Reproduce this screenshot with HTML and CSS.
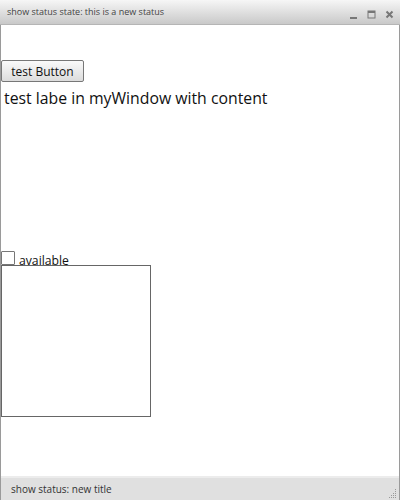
FILE: index.html
```html
<!DOCTYPE html>
<html>
<head>
<meta charset="utf-8">
<link rel="stylesheet" href="styles.css">
</head>
<body>
<div class="window">
  <div class="titlebar">
    <span class="title">show status state: this is a new status</span>
    <div class="controls">
      <svg width="9" height="9" viewBox="0 0 9 9"><rect x="1" y="7" width="7" height="2" fill="#777"/></svg>
      <svg width="9" height="9" viewBox="0 0 9 9"><rect x="1" y="1" width="7" height="7" fill="none" stroke="#777" stroke-width="1"/><rect x="1" y="1" width="7" height="2" fill="#777"/></svg>
      <svg width="9" height="9" viewBox="0 0 9 9"><path d="M1.5 1.5 L7.5 7.5 M7.5 1.5 L1.5 7.5" stroke="#777" stroke-width="2"/></svg>
    </div>
  </div>
  <div class="content">
    <button class="btn">test Button</button>
    <div class="label">test labe in myWindow with content</div>
    <div class="spacer"></div>
    <label class="check"><span class="box"></span><span class="check-text">available</span></label>
    <div class="panel"></div>
  </div>
  <div class="statusbar">
    <span>show status: new title</span>
    <svg class="grip" width="8" height="10" viewBox="0 0 8 10">
      <rect x="6" y="0" width="1" height="1" fill="#999"/>
      <rect x="6" y="2" width="1" height="1" fill="#999"/>
      <rect x="6" y="4" width="1" height="1" fill="#999"/>
      <rect x="6" y="6" width="1" height="1" fill="#999"/>
      <rect x="6" y="8" width="1" height="1" fill="#999"/>
      <rect x="4" y="4" width="1" height="1" fill="#999"/>
      <rect x="4" y="6" width="1" height="1" fill="#999"/>
      <rect x="4" y="8" width="1" height="1" fill="#999"/>
      <rect x="2" y="6" width="1" height="1" fill="#999"/>
      <rect x="2" y="8" width="1" height="1" fill="#999"/>
      <rect x="0" y="8" width="1" height="1" fill="#999"/>
    </svg>
  </div>
</div>
</body>
</html>
```
FILE: styles.css
```css
html, body {
  margin: 0;
  padding: 0;
  background: #fff;
}
body {
  font-family: "Open Sans", sans-serif;
}
.window {
  width: 400px;
  height: 500px;
  box-sizing: border-box;
  border-left: 1px solid #9a9a9a;
  border-right: 1px solid #9a9a9a;
  display: flex;
  flex-direction: column;
}
.titlebar {
  height: 24px;
  flex: none;
  background: linear-gradient(#f6f6f6, #c9c9c9);
  border-bottom: 1px solid #b5b5b5;
  display: flex;
  align-items: center;
  justify-content: space-between;
  padding: 0 6px 0 7px;
  margin: 0 -1px;
}
.title {
  font-size: 9px;
  color: #444;
  margin-top: -2px;
}
.controls {
  display: flex;
  gap: 9px;
  align-items: center;
  margin-top: 4px;
}
.content {
  flex: 1;
  display: flex;
  flex-direction: column;
  align-items: flex-start;
  padding-top: 35px;
}
.btn {
  font-family: "Open Sans", sans-serif;
  font-size: 12px;
  color: #111;
  height: 22px;
  width: 83px;
  padding: 0;
  border: 1px solid #777;
  border-radius: 2px;
  background: linear-gradient(#fafafa, #dcdcdc);
}
.label {
  font-size: 15.8px;
  color: #111;
  margin-left: 3px;
  margin-top: 5px;
  line-height: 22px;
}
.spacer {
  height: 143px;
}
.check {
  display: flex;
  align-items: flex-end;
  height: 13px;
}
.box {
  width: 12px;
  height: 12px;
  border: 1px solid #777;
  background: #fff;
  border-radius: 1px;
}
.check-text {
  font-size: 12.2px;
  color: #111;
  margin-left: 4px;
  line-height: 13px;
  position: relative;
  top: 2px;
}
.panel {
  width: 148px;
  height: 150px;
  border: 1px solid #666;
}
.statusbar {
  height: 24px;
  flex: none;
  box-sizing: border-box;
  background: #e0e0e0;
  border-top: 2px solid #ececec;
  display: flex;
  align-items: center;
  justify-content: space-between;
  padding: 0 2px 0 10px;
  font-size: 10px;
  color: #333;
}
.grip {
  align-self: flex-end;
  margin-bottom: 1px;
}
```
